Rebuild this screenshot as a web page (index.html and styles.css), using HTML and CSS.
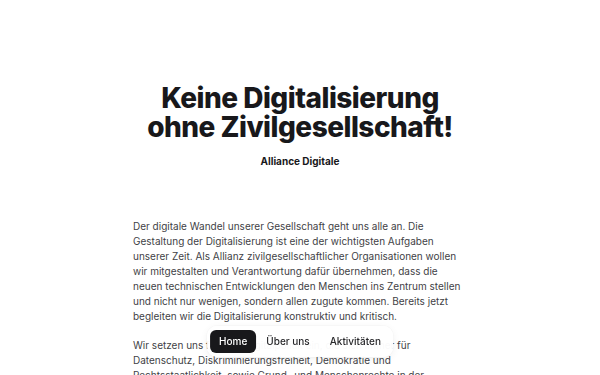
FILE: index.html
```html
<!DOCTYPE html>
<html lang="de">
<head>
<meta charset="utf-8">
<title>Alliance Digitale</title>
<link rel="stylesheet" href="styles.css">
</head>
<body>
<main class="page">
  <header class="hero">
    <h1 class="title">Keine Digitalisierung<br>ohne Zivilgesellschaft!</h1>
    <p class="subtitle">Alliance Digitale</p>
  </header>
  <section class="content">
    <p>Der digitale Wandel unserer Gesellschaft geht uns alle an. Die Gestaltung der Digitalisierung ist eine der wichtigsten Aufgaben unserer Zeit. Als Allianz zivilgesellschaftlicher Organisationen wollen wir mitgestalten und Verantwortung dafür übernehmen, dass die neuen technischen Entwicklungen den Menschen ins Zentrum stellen und nicht nur wenigen, sondern allen zugute kommen. Bereits jetzt begleiten wir die Digitalisierung konstruktiv und kritisch.</p>
    <p>Wir setzen uns für eine Digitalpolitik ein, die sich immer für Datenschutz, Diskriminierungsfreiheit, Demokratie und Rechtsstaatlichkeit, sowie Grund- und Menschenrechte in der digitalen Welt einsetzt.</p>
  </section>
</main>
<nav class="nav">
  <a class="nav-item active" href="#">Home</a>
  <a class="nav-item" href="#">Über uns</a>
  <a class="nav-item" href="#">Aktivitäten</a>
</nav>
</body>
</html>
```

FILE: styles.css
```css
* { box-sizing: border-box; }
html, body { margin: 0; padding: 0; background: #ffffff; }
body {
  font-family: Inter, "Noto Sans", sans-serif;
  color: #27272a;
  height: 375px;
  overflow: hidden;
}
.page {
  display: flex;
  flex-direction: column;
  align-items: center;
  padding-top: 84px;
}
.hero {
  display: flex;
  flex-direction: column;
  align-items: center;
  text-align: center;
}
.title {
  margin: 0;
  font-size: 28px;
  line-height: 29px;
  font-weight: 800;
  letter-spacing: -0.018em;
  color: #18181b;
}
.subtitle {
  margin: 12px 0 0;
  font-size: 10px;
  line-height: 15px;
  font-weight: 700;
  color: #18181b;
}
.content {
  width: 334px;
  margin-top: 50px;
}
.content p {
  margin: 0 0 14px;
  font-size: 10px;
  line-height: 15px;
  color: #3f3f46;
}
.nav {
  position: fixed;
  left: 50%;
  bottom: 18px;
  transform: translateX(-50%);
  display: flex;
  align-items: center;
  padding: 4px 2px 4px 3px;
  background: rgba(255, 255, 255, 0.97);
  border-radius: 10px;
  box-shadow: 0 2px 8px rgba(0, 0, 0, 0.06), 0 0 0 1px rgba(0, 0, 0, 0.02);
}
.nav-item {
  display: block;
  padding: 0 10px;
  height: 23px;
  line-height: 23px;
  font-size: 10px;
  font-weight: 500;
  color: #27272a;
  text-decoration: none;
  border-radius: 6px;
}
.nav-item.active {
  padding: 0 9px;
  background: #18181b;
  color: #ffffff;
}
```
